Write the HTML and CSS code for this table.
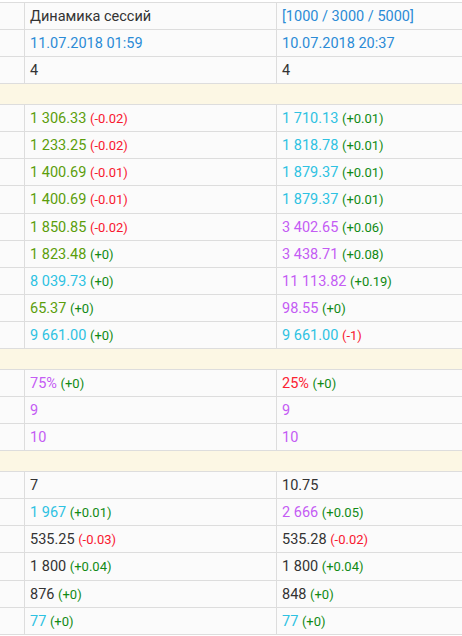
FILE: index.html
```html
<!DOCTYPE html>
<html lang="ru">
<head>
    <meta charset="UTF-8">
    <meta name="viewport" content="width=device-width, initial-scale=1.0">
    <title>Динамика сессий</title>
    <link rel="stylesheet" href="styles.css">
</head>
<body>

    <div class="stats">
        <div class="row head">
            <div class="cell side"></div>
            <div class="cell">Динамика сессий</div>
            <div class="cell v-blue">[1000 / 3000 / 5000]</div>
        </div>
        <div class="row">
            <div class="cell side"></div>
            <div class="cell v-blue">11.07.2018 01:59</div>
            <div class="cell v-blue">10.07.2018 20:37</div>
        </div>
        <div class="row">
            <div class="cell side"></div>
            <div class="cell">4</div>
            <div class="cell">4</div>
        </div>

        <!-- Group separator -->
        <div class="row group"></div>

        <div class="row">
            <div class="cell side"></div>
            <div class="cell"><span class="v-green">1 306.33</span>&nbsp;<span class="d-down">(-0.02)</span></div>
            <div class="cell"><span class="v-cyan">1 710.13</span>&nbsp;<span class="d-up">(+0.01)</span></div>
        </div>
        <div class="row">
            <div class="cell side"></div>
            <div class="cell"><span class="v-green">1 233.25</span>&nbsp;<span class="d-down">(-0.02)</span></div>
            <div class="cell"><span class="v-cyan">1 818.78</span>&nbsp;<span class="d-up">(+0.01)</span></div>
        </div>
        <div class="row">
            <div class="cell side"></div>
            <div class="cell"><span class="v-green">1 400.69</span>&nbsp;<span class="d-down">(-0.01)</span></div>
            <div class="cell"><span class="v-cyan">1 879.37</span>&nbsp;<span class="d-up">(+0.01)</span></div>
        </div>
        <div class="row">
            <div class="cell side"></div>
            <div class="cell"><span class="v-green">1 400.69</span>&nbsp;<span class="d-down">(-0.01)</span></div>
            <div class="cell"><span class="v-cyan">1 879.37</span>&nbsp;<span class="d-up">(+0.01)</span></div>
        </div>
        <div class="row">
            <div class="cell side"></div>
            <div class="cell"><span class="v-green">1 850.85</span>&nbsp;<span class="d-down">(-0.02)</span></div>
            <div class="cell"><span class="v-purple">3 402.65</span>&nbsp;<span class="d-up">(+0.06)</span></div>
        </div>
        <div class="row">
            <div class="cell side"></div>
            <div class="cell"><span class="v-green">1 823.48</span>&nbsp;<span class="d-up">(+0)</span></div>
            <div class="cell"><span class="v-purple">3 438.71</span>&nbsp;<span class="d-up">(+0.08)</span></div>
        </div>
        <div class="row">
            <div class="cell side"></div>
            <div class="cell"><span class="v-cyan">8 039.73</span>&nbsp;<span class="d-up">(+0)</span></div>
            <div class="cell"><span class="v-purple">11 113.82</span>&nbsp;<span class="d-up">(+0.19)</span></div>
        </div>
        <div class="row">
            <div class="cell side"></div>
            <div class="cell"><span class="v-green">65.37</span>&nbsp;<span class="d-up">(+0)</span></div>
            <div class="cell"><span class="v-purple">98.55</span>&nbsp;<span class="d-up">(+0)</span></div>
        </div>
        <div class="row">
            <div class="cell side"></div>
            <div class="cell"><span class="v-cyan">9 661.00</span>&nbsp;<span class="d-up">(+0)</span></div>
            <div class="cell"><span class="v-cyan">9 661.00</span>&nbsp;<span class="d-down">(-1)</span></div>
        </div>

        <!-- Group separator -->
        <div class="row group"></div>

        <div class="row">
            <div class="cell side"></div>
            <div class="cell"><span class="v-purple">75%</span>&nbsp;<span class="d-up">(+0)</span></div>
            <div class="cell"><span class="v-red">25%</span>&nbsp;<span class="d-up">(+0)</span></div>
        </div>
        <div class="row">
            <div class="cell side"></div>
            <div class="cell v-purple">9</div>
            <div class="cell v-purple">9</div>
        </div>
        <div class="row">
            <div class="cell side"></div>
            <div class="cell v-purple">10</div>
            <div class="cell v-purple">10</div>
        </div>

        <!-- Group separator -->
        <div class="row group"></div>

        <div class="row">
            <div class="cell side"></div>
            <div class="cell">7</div>
            <div class="cell">10.75</div>
        </div>
        <div class="row">
            <div class="cell side"></div>
            <div class="cell"><span class="v-cyan">1 967</span>&nbsp;<span class="d-up">(+0.01)</span></div>
            <div class="cell"><span class="v-purple">2 666</span>&nbsp;<span class="d-up">(+0.05)</span></div>
        </div>
        <div class="row">
            <div class="cell side"></div>
            <div class="cell">535.25&nbsp;<span class="d-down">(-0.03)</span></div>
            <div class="cell">535.28&nbsp;<span class="d-down">(-0.02)</span></div>
        </div>
        <div class="row">
            <div class="cell side"></div>
            <div class="cell">1 800&nbsp;<span class="d-up">(+0.04)</span></div>
            <div class="cell">1 800&nbsp;<span class="d-up">(+0.04)</span></div>
        </div>
        <div class="row">
            <div class="cell side"></div>
            <div class="cell">876&nbsp;<span class="d-up">(+0)</span></div>
            <div class="cell">848&nbsp;<span class="d-up">(+0)</span></div>
        </div>
        <div class="row">
            <div class="cell side"></div>
            <div class="cell"><span class="v-cyan">77</span>&nbsp;<span class="d-up">(+0)</span></div>
            <div class="cell"><span class="v-cyan">77</span>&nbsp;<span class="d-up">(+0)</span></div>
        </div>
    </div>

</body>
</html>
```

FILE: styles.css
```css
body {
    font-family: Roboto, "Liberation Sans", Arial, sans-serif;
    font-size: 14.5px;
    color: #333;
    margin: 0;
    padding: 0;
    background-color: #fff;
    overflow: hidden;
}

.stats {
    margin-top: 2px;
    border-top: 1px solid #ddd;
}
.row {
    display: grid;
    grid-template-columns: 25px 252px 1fr;
    box-sizing: border-box;
    height: 27.2px;
    border-bottom: 1px solid #ddd;
    background-color: #fbfbfb;
}
.row.head {
    height: 27px;
}
.row.group {
    height: 20.4px;
    background-color: #fcf7e4;
}
.cell {
    display: flex;
    align-items: center;
    padding: 1px 5px 0;
    white-space: nowrap;
    overflow: hidden;
}
.cell.side,
.cell:nth-child(2) {
    border-right: 1px solid #ddd;
}

.v-blue { color: #2b8bd6; }
.v-green { color: #5b9e0c; }
.v-cyan { color: #2ec2e2; }
.v-purple { color: #c45cf4; }
.v-red { color: #fc2231; }

.d-up {
    color: #118a15;
    font-size: 13px;
}
.d-down {
    color: #f8172f;
    font-size: 13px;
}
```
